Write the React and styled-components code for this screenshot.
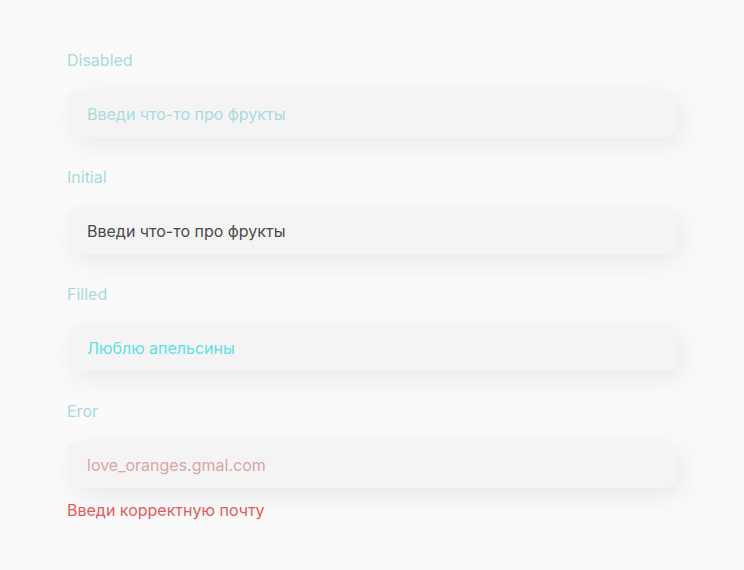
import styled, { createGlobalStyle } from 'styled-components';

const GlobalStyle = createGlobalStyle`
body {
  margin: 0;
  background: #fafafa;
  font-family: Inter, "Noto Sans", sans-serif;
}
`

const Page = styled.div`
width: 610px;
padding: 50px 0 0 67px;
display: flex;
flex-direction: column;
gap: 30px;
`
const Field = styled.div`
display: flex;
flex-direction: column;
`
const Label = styled.label`
font-size: 16px;
line-height: 20px;
color: #a6dada;
margin-bottom: 20px;
`
const Box = styled.div`
height: 47px;
box-sizing: border-box;
padding: 0 20px;
display: flex;
align-items: center;
background: #f4f4f4;
border-radius: 12px;
box-shadow: 6px 8px 28px rgba(0, 0, 0, 0.07);
font-size: 16px;
color: ${p => p.$color};
`
const ErrorText = styled.div`
margin-top: 12px;
font-size: 16px;
line-height: 20px;
color: #e05c5c;
`

const fields = [
  { label: 'Disabled', text: 'Введи что-то про фрукты', color: '#a9dbdb' },
  { label: 'Initial', text: 'Введи что-то про фрукты', color: '#4a4a4a' },
  { label: 'Filled', text: 'Люблю апельсины', color: '#5ee0e4' },
  { label: 'Eror', text: 'love_oranges.gmal.com', color: '#d9a6a6', error: 'Введи корректную почту' },
]

const App = () => {
  return (
    <>
      <GlobalStyle />
      <Page>
        {fields.map(f => (
          <Field key={f.label}>
            <Label>{f.label}</Label>
            <Box $color={f.color}>{f.text}</Box>
            {f.error && <ErrorText>{f.error}</ErrorText>}
          </Field>
        ))}
      </Page>
    </>
  )
}

export default App
